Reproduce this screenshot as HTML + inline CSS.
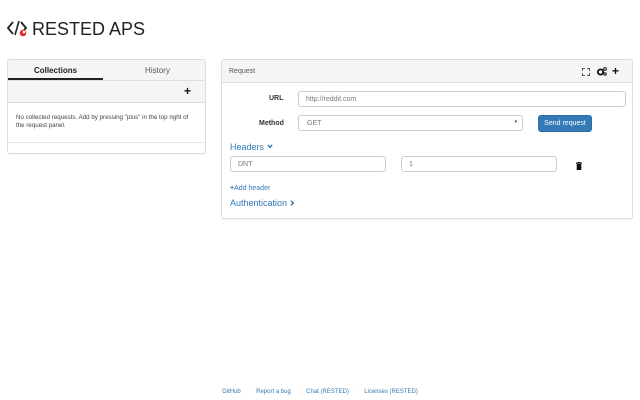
<!DOCTYPE html>
<html><head><style>
*{box-sizing:border-box;margin:0;padding:0}
body{width:640px;height:400px;background:#fff;font-family:"Liberation Sans",sans-serif;position:relative;overflow:hidden;color:#333}
.abs{position:absolute}
.panel{border:1px solid #ddd;border-radius:3px;background:#fff;box-shadow:0 1px 1px rgba(0,0,0,.05)}
.inp{position:absolute;border:1px solid #ccc;border-radius:3px;height:16px;font-size:7px;color:#777;padding:4px 7px;line-height:7px}
a{color:#337ab7;text-decoration:none}
</style></head><body>
<div class="abs" style="left:7px;top:18px;font-size:18px;color:#222;line-height:22px">
<svg width="22" height="20" viewBox="0 0 22 20" style="vertical-align:-3px"><path d="M6 4 L1 10 L6 16" stroke="#222" stroke-width="1.8" fill="none"/><path d="M12 3 L8 17" stroke="#222" stroke-width="1.6"/><path d="M14 4 L19 10 L17 12" stroke="#222" stroke-width="1.8" fill="none"/><circle cx="16" cy="15" r="3.3" fill="#d33"/><circle cx="17" cy="14" r="1.3" fill="#fff"/></svg><span style="margin-left:3px">RESTED APS</span></div>

<div class="panel abs" style="left:7px;top:59px;width:199px;height:95px;overflow:hidden">
<div style="height:21px;background:#f5f5f5;border-bottom:1px solid #ddd;position:relative;font-size:8px">
<div class="abs" style="left:0;top:0;width:95px;height:20px;text-align:center;line-height:21px;color:#222;font-weight:bold;border-bottom:2px solid #222">Collections</div>
<div class="abs" style="left:100px;top:0;width:99px;text-align:center;line-height:21px;color:#555">History</div></div>
<div style="height:22px;background:#f5f5f5;border-bottom:1px solid #ddd;position:relative"><span class="abs" style="right:14px;top:3px;font-size:12px;font-weight:bold;color:#111">+</span></div>
<div style="font-size:6.2px;color:#444;padding:11px 8px 0 8px;line-height:8px;height:40px;border-bottom:1px solid #e5e5e5">No collected requests. Add by pressing "plus" in the top right of the request panel.</div>
</div>

<div class="panel abs" style="left:221px;top:59px;width:412px;height:160px">
<div style="height:23px;background:#f5f5f5;border-bottom:1px solid #ddd;position:relative">
<span class="abs" style="left:7px;top:8px;font-size:7px;color:#555">Request</span>
<svg class="abs" style="left:360px;top:8px" width="8" height="8" viewBox="0 0 8 8"><path d="M0 3V0H3M5 0H8V3M8 5V8H5M3 8H0V5" stroke="#111" stroke-width="1.2" fill="none"/></svg>
<svg class="abs" style="left:375px;top:7px" width="10" height="9" viewBox="0 0 10 9"><circle cx="3.5" cy="5" r="2.6" stroke="#111" stroke-width="1.8" fill="none"/><circle cx="8" cy="2" r="1.4" stroke="#111" stroke-width="1" fill="none"/><circle cx="8" cy="7" r="1.2" stroke="#111" stroke-width="1" fill="none"/></svg>
<span class="abs" style="left:390px;top:4px;font-size:12px;font-weight:bold;color:#111">+</span>
</div>
<span class="abs" style="left:47px;top:35px;font-size:7px;font-weight:bold;color:#333">URL</span>
<div class="inp" style="left:76px;top:31px;width:328px">http://reddit.com</div>
<span class="abs" style="left:37px;top:60px;font-size:7px;font-weight:bold;color:#333">Method</span>
<div class="inp" style="left:76px;top:55px;width:225px;padding-left:8px">GET<span style="position:absolute;right:5px;top:3px;font-size:5px;color:#333">▾</span></div>
<div class="abs" style="left:316px;top:55px;width:54px;height:17px;background:#337ab7;border:1px solid #2e6da4;border-radius:3px;color:#fff;font-size:7px;text-align:center;line-height:15px">Send request</div>
<span class="abs" style="left:8px;top:82px;font-size:9px;color:#337ab7">Headers <svg width="6" height="5" viewBox="0 0 6 5" style="vertical-align:1px"><path d="M0.8 1L3 3.4L5.2 1" stroke="#337ab7" stroke-width="1.4" fill="none"/></svg></span>
<div class="inp" style="left:8px;top:96px;width:156px">DNT</div>
<div class="inp" style="left:179px;top:96px;width:156px">1</div>
<svg class="abs" style="left:354px;top:102px" width="6" height="8" viewBox="0 0 6 8"><rect x="0" y="0.5" width="6" height="1.2" fill="#111"/><rect x="2" y="0" width="2" height="1" fill="#111"/><rect x="0.7" y="2" width="4.6" height="6" fill="#111"/></svg>
<span class="abs" style="left:8px;top:125px;font-size:7px;color:#337ab7"><b>+</b>Add header</span>
<span class="abs" style="left:8px;top:138px;font-size:9px;color:#337ab7">Authentication <svg width="5" height="6" viewBox="0 0 5 6" style="vertical-align:0"><path d="M1 0.8L3.4 3L1 5.2" stroke="#337ab7" stroke-width="1.4" fill="none"/></svg></span>
</div>

<div class="abs" style="left:0;width:640px;top:389px;text-align:center;font-size:6px;color:#bbb">
<a>GitHub</a> &nbsp;&nbsp;&nbsp;·&nbsp;&nbsp;&nbsp; <a>Report a bug</a> &nbsp;&nbsp;&nbsp;·&nbsp;&nbsp;&nbsp; <a>Chat (RESTED)</a> &nbsp;&nbsp;&nbsp;·&nbsp;&nbsp;&nbsp; <a>Licenses (RESTED)</a></div>
</body></html>
